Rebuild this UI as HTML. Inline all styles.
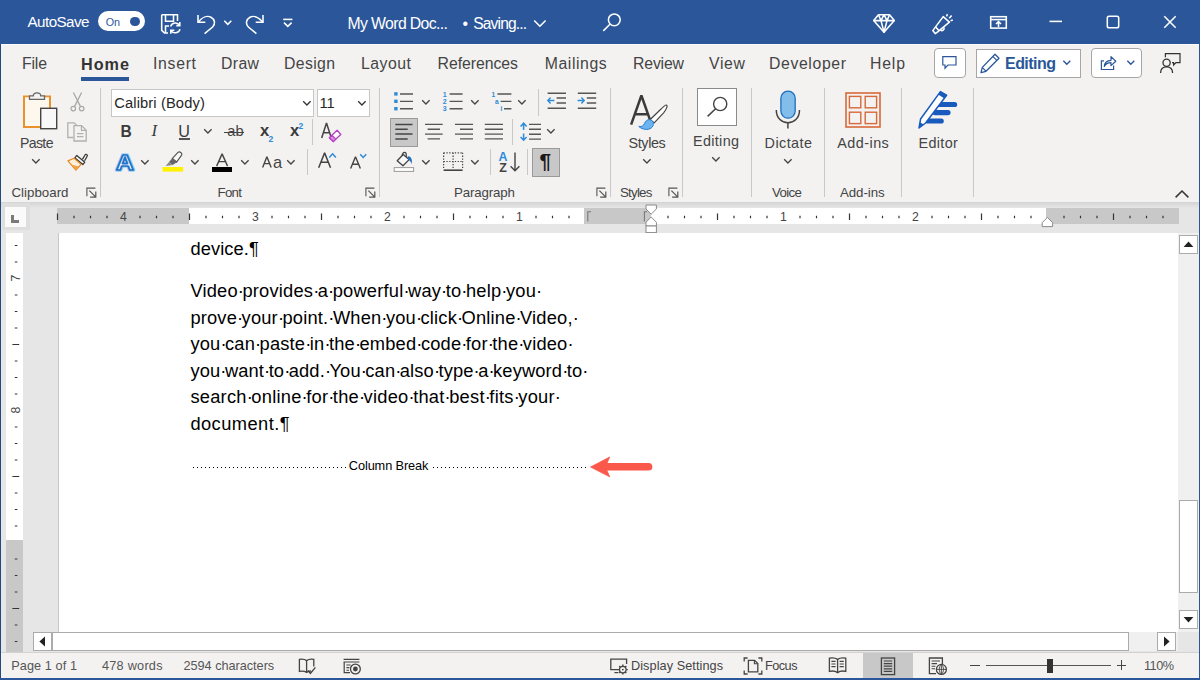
<!DOCTYPE html><html><head><meta charset="utf-8"><title>Word</title><style>

html,body{margin:0;padding:0;}
body{width:1200px;height:680px;overflow:hidden;position:relative;background:#e6e6e6;font-family:"Liberation Sans",sans-serif;}
.t{position:absolute;white-space:nowrap;line-height:1;}
.d{display:inline-block;width:4.6px;text-align:center;letter-spacing:0;}

</style></head><body>
<div style="position:absolute;left:0px;top:0px;width:1200px;height:44px;background:#2b579a;"></div>
<div style="position:absolute;left:0px;top:44px;width:1200px;height:158px;background:#f3f2f1;"></div>
<div style="position:absolute;left:0px;top:202px;width:1200px;height:6px;background:linear-gradient(#d4d4d4,#e6e6e6);"></div>
<div style="position:absolute;left:0px;top:652px;width:1200px;height:28px;background:#f3f2f1;border-top:1px solid #d2d2d2;box-sizing:border-box;"></div>
<div style="position:absolute;left:0px;top:44px;width:1px;height:636px;background:#27477f;"></div>
<div style="position:absolute;left:1px;top:44px;width:1198px;height:1px;background:#fbfbfb;"></div>
<div style="position:absolute;left:1199px;top:44px;width:1px;height:636px;background:#2b579a;"></div>
<div style="position:absolute;left:0px;top:678px;width:1200px;height:2px;background:#2b579a;"></div>
<div style="position:absolute;left:98px;top:11px;width:47px;height:20px;background:#fff;border-radius:10px;"></div>
<div style="position:absolute;left:130.3px;top:16.5px;width:9.4px;height:9.4px;background:#2b579a;border-radius:50%;"></div>
<svg style="position:absolute;left:160px;top:13px;" width="22" height="22" viewBox="0 0 22 22" fill="none"><path d="M1.7 1.7 H17.5 V8 M1.7 1.7 V17.3 L4.5 20 H8" stroke="#fff" stroke-width="1.55" fill="none"/><path d="M5.5 1.7 V8.3 H13.5 V1.7" stroke="#fff" stroke-width="1.55" fill="none"/><path d="M5.5 20 V13 H9" stroke="#fff" stroke-width="1.55" fill="none"/><path d="M10.6 13.5 A5 5 0 0 1 19.5 12.2 M19.8 9 V12.6 H16.3" stroke="#fff" stroke-width="1.55" fill="none" stroke-width="1.3"/><path d="M20 16.2 A5 5 0 0 1 11.1 17.6 M10.8 20.8 V17.2 H14.3" stroke="#fff" stroke-width="1.55" fill="none" stroke-width="1.3"/></svg>
<svg style="position:absolute;left:196px;top:13px;" width="21" height="22" viewBox="0 0 21 22" fill="none"><path d="M2 2 V9.3 H9.3" stroke="#fff" stroke-width="1.55" fill="none"/><path d="M2.3 9 C6 4.5 11 2.2 15 4.2 C19.2 6.5 19.5 11 16.6 14 L8.6 20.6" stroke="#fff" stroke-width="1.55" fill="none"/></svg>
<svg style="position:absolute;left:223px;top:19px;" width="10" height="8" viewBox="0 0 10 8" fill="none"><path d="M1.3 1.8 L4.8 5.3 L8.3 1.8" stroke="#fff" stroke-width="1.55" fill="none" stroke-width="1.3"/></svg>
<svg style="position:absolute;left:244px;top:13px;" width="21" height="22" viewBox="0 0 21 22" fill="none"><path d="M19 2 V9.3 H11.7" stroke="#fff" stroke-width="1.55" fill="none"/><path d="M18.7 9 C15 4.5 10 2.2 6 4.2 C1.8 6.5 1.5 11 4.4 14 L12.4 20.6" stroke="#fff" stroke-width="1.55" fill="none"/></svg>
<svg style="position:absolute;left:282px;top:18px;" width="12" height="10" viewBox="0 0 12 10" fill="none"><path d="M1.2 1.4 H10.4" stroke="#fff" stroke-width="1.55" fill="none" stroke-width="1.3"/><path d="M2 4.6 L5.8 8.4 L9.6 4.6" stroke="#fff" stroke-width="1.55" fill="none" stroke-width="1.3"/></svg>
<svg style="position:absolute;left:533px;top:19px;" width="14" height="9" viewBox="0 0 14 9" fill="none"><path d="M1.2 1.5 L6.9 7.2 L12.6 1.5" stroke="#fff" stroke-width="1.55" fill="none" stroke-width="1.3"/></svg>
<svg style="position:absolute;left:602px;top:12px;" width="20" height="20" viewBox="0 0 20 20" fill="none"><circle cx="12.3" cy="7.8" r="5.9" stroke="#fff" stroke-width="1.55" fill="none"/><path d="M8.2 12 L1.3 18.9" stroke="#fff" stroke-width="1.55" fill="none"/></svg>
<svg style="position:absolute;left:872px;top:13px;" width="24" height="21" viewBox="0 0 24 21" fill="none"><path d="M6.5 1.7 H17.5 L22.3 7.6 L12 19.3 L1.7 7.6 Z" stroke="#fff" stroke-width="1.55" fill="none" stroke-width="1.3" stroke-linejoin="round"/><path d="M1.7 7.6 H22.3 M6.5 1.7 L9 7.6 L12 19.3 L15 7.6 L17.5 1.7 M9 7.6 L12 1.7 L15 7.6" stroke="#fff" stroke-width="1.55" fill="none" stroke-width="1.2" stroke-linejoin="round"/></svg>
<svg style="position:absolute;left:931px;top:13px;" width="23" height="22" viewBox="0 0 23 22" fill="none"><path d="M12.2 3.6 L18.4 9.2 L7 18.6 L4.2 20.6 L1.8 17.6 Z" stroke="#fff" stroke-width="1.55" fill="none" stroke-width="1.3" stroke-linejoin="round"/><path d="M4.6 14 L8 17.6" stroke="#fff" stroke-width="1.55" fill="none" stroke-width="1.2"/><path d="M9.5 17.2 A2.3 2.3 0 0 0 13 14.6" stroke="#fff" stroke-width="1.55" fill="none" stroke-width="1.2"/><path d="M15.5 3.3 L16.5 1.2 M18.3 5.2 L20.6 2.4 M19.6 7.8 L21.8 7" stroke="#fff" stroke-width="1.55" fill="none" stroke-width="1.2"/></svg>
<svg style="position:absolute;left:989px;top:15px;" width="19" height="15" viewBox="0 0 19 15" fill="none"><rect x="1.7" y="1.7" width="15.6" height="11.4" stroke="#fff" stroke-width="1.55" fill="none" stroke-width="1.3"/><path d="M1.7 4.6 H17.3" stroke="#fff" stroke-width="1.55" fill="none" stroke-width="1.2"/><path d="M9.5 12 V6.8 M7 9 L9.5 6.6 L12 9" stroke="#fff" stroke-width="1.55" fill="none" stroke-width="1.2"/></svg>
<svg style="position:absolute;left:1049px;top:20px;" width="14" height="3" viewBox="0 0 14 3" fill="none"><path d="M0.5 1.4 H13" stroke="#fff" stroke-width="1.55" fill="none" stroke-width="1.3"/></svg>
<svg style="position:absolute;left:1106px;top:15px;" width="14" height="14" viewBox="0 0 14 14" fill="none"><rect x="1.3" y="1.3" width="11.4" height="11.4" rx="1.8" stroke="#fff" stroke-width="1.55" fill="none" stroke-width="1.3"/></svg>
<svg style="position:absolute;left:1163px;top:15px;" width="14" height="14" viewBox="0 0 14 14" fill="none"><path d="M1.3 1.3 L12.7 12.7 M12.7 1.3 L1.3 12.7" stroke="#fff" stroke-width="1.55" fill="none" stroke-width="1.3"/></svg>
<div style="position:absolute;left:81px;top:77px;width:48px;height:3.5px;background:#2b579a;"></div>
<div style="position:absolute;left:934px;top:48px;width:32px;height:30px;background:#fff;border:1px solid #a6a6a6;border-radius:4px;box-sizing:border-box;"></div>
<svg style="position:absolute;left:941px;top:55px;" width="18" height="16" viewBox="0 0 18 16" fill="none"><path d="M1.8 1.6 H15 V10 H7 L4 13.2 V10 H1.8 Z" stroke="#2b579a" stroke-width="1.2" fill="none" stroke-linejoin="miter"/></svg>
<div style="position:absolute;left:976px;top:49px;width:105px;height:28.5px;background:#fff;border:1px solid #a6a6a6;box-sizing:border-box;"></div>
<svg style="position:absolute;left:979px;top:52px;" width="23" height="23" viewBox="0 0 23 23" fill="none"><path d="M16 2.3 L20 6.3 L7 19.3 L2 20.6 L3.3 15.4 Z" stroke="#2b579a" stroke-width="1.3" fill="none" stroke-linejoin="round"/><path d="M14 4.6 L17.8 8.4" stroke="#2b579a" stroke-width="1.2"/><path d="M3.4 15.6 L6.8 19" stroke="#2b579a" stroke-width="1.1"/></svg>
<svg style="position:absolute;left:1062px;top:59px;" width="10" height="8" viewBox="0 0 10 8" fill="none"><path d="M1.3 1.8 L4.8 5.3 L8.3 1.8" stroke="#2b579a" stroke-width="1.4"/></svg>
<div style="position:absolute;left:1091px;top:48px;width:51px;height:30px;background:#fff;border:1px solid #a6a6a6;border-radius:4px;box-sizing:border-box;"></div>
<svg style="position:absolute;left:1099px;top:54px;" width="20" height="18" viewBox="0 0 20 18" fill="none"><path d="M5 6.8 H2.4 V15.5 H14.6 V11.5" stroke="#2b579a" stroke-width="1.2" fill="none"/><path d="M5.3 12.5 C5.6 8.6 8.2 6.4 12 6.3 V2.6 L16.8 7.2 L12 11.6 V8.6 C9 8.6 6.6 9.7 5.3 12.5 Z" stroke="#2b579a" stroke-width="1.2" fill="none" stroke-linejoin="round"/></svg>
<svg style="position:absolute;left:1126px;top:59px;" width="10" height="8" viewBox="0 0 10 8" fill="none"><path d="M1.3 1.8 L4.8 5.3 L8.3 1.8" stroke="#2b579a" stroke-width="1.4"/></svg>
<svg style="position:absolute;left:1159px;top:52px;" width="23" height="23" viewBox="0 0 23 23" fill="none"><circle cx="7.6" cy="10.8" r="3.6" stroke="#333" stroke-width="1.3"/><path d="M1.6 21 C1.6 16.6 4.2 14.8 7.6 14.8 C11 14.8 13.6 16.6 13.6 21" stroke="#333" stroke-width="1.3" fill="none"/><path d="M6.4 5.2 V1.7 H21 V10.6 H17 L14.6 13 V10.6 H13" stroke="#333" stroke-width="1.2" fill="none"/></svg>
<div style="position:absolute;left:100px;top:88px;width:1px;height:108.5px;background:#c8c8c8;"></div>
<div style="position:absolute;left:379px;top:88px;width:1px;height:108.5px;background:#c8c8c8;"></div>
<div style="position:absolute;left:610px;top:88px;width:1px;height:108.5px;background:#c8c8c8;"></div>
<div style="position:absolute;left:682px;top:88px;width:1px;height:108.5px;background:#c8c8c8;"></div>
<div style="position:absolute;left:751px;top:88px;width:1px;height:108.5px;background:#c8c8c8;"></div>
<div style="position:absolute;left:824px;top:88px;width:1px;height:108.5px;background:#c8c8c8;"></div>
<div style="position:absolute;left:901px;top:88px;width:1px;height:108.5px;background:#c8c8c8;"></div>
<div style="position:absolute;left:973px;top:88px;width:1px;height:108.5px;background:#c8c8c8;"></div>
<svg style="position:absolute;left:20px;top:90px;" width="40" height="42" viewBox="0 0 40 42" fill="none"><path d="M9.5 6.5 H4 V37 H21" stroke="#e8912d" stroke-width="2" fill="#fef7ee"/><path d="M24.5 6.5 H30 V18" stroke="#e8912d" stroke-width="2" fill="none"/>
<path d="M5 7.5 H29 V36 H5 Z" fill="#fef7ee"/>
<path d="M9.5 9.3 V5.8 H13.3 C13.3 1.8 20.7 1.8 20.7 5.8 H24.5 V9.3 Z" stroke="#666" stroke-width="1.3" fill="#f3f2f1"/>
<rect x="20.7" y="18.3" width="16" height="20.4" fill="#f8f8f8" stroke="#444" stroke-width="1.4"/></svg>
<svg style="position:absolute;left:31.4px;top:158.3px;" width="10" height="7" viewBox="0 0 10 7" fill="none"><path d="M1.2 1.3 L4.9 5 L8.6 1.3" stroke="#444" stroke-width="1.3"/></svg>
<svg style="position:absolute;left:69px;top:91px;" width="17" height="22" viewBox="0 0 17 22" fill="none"><path d="M4.4 1.5 L11.4 15.4 M12.6 1.5 L5.6 15.4" stroke="#a8a8a8" stroke-width="1.3"/><circle cx="4.3" cy="17.6" r="2.3" stroke="#a8a8a8" stroke-width="1.2"/><circle cx="12.7" cy="17.6" r="2.3" stroke="#a8a8a8" stroke-width="1.2"/></svg>
<svg style="position:absolute;left:66px;top:121px;" width="22" height="22" viewBox="0 0 22 22" fill="none"><path d="M7.5 16.5 H1.8 V1.8 H8.2 L11 4.6" stroke="#b0b0b0" stroke-width="1.3" fill="none"/><path d="M8 4.6 H15.6 L20.2 9.2 V20 H8 Z" stroke="#b0b0b0" stroke-width="1.3" fill="#f3f2f1"/><path d="M15.4 4.8 V9.4 H20" stroke="#b0b0b0" stroke-width="1.1"/><path d="M11 12.6 H17.4 M11 15.6 H17.4" stroke="#b0b0b0" stroke-width="1.1"/></svg>
<svg style="position:absolute;left:66px;top:151px;" width="23" height="21" viewBox="0 0 23 21" fill="none"><path d="M16.4 8.4 L19 4 C19.9 2.5 22 3.8 21.1 5.3 L18.6 9.8" stroke="#3b3b3b" stroke-width="1.3" fill="#f8f8f8"/><path d="M10.8 4.4 L18.8 11.2 L16.8 13.6 L8.8 6.8 Z" stroke="#3b3b3b" stroke-width="1.3" fill="#f8f8f8" stroke-linejoin="round"/><path d="M8.1 7.2 L15 13.4 L9.9 19.2 L1.9 9.9 Z" stroke="#e8861e" stroke-width="1.2" fill="#fdf0de" stroke-linejoin="round"/><path d="M5.2 13.4 L13 15.6 L9.9 19.2 Z" fill="#f2a34a"/></svg>
<svg style="position:absolute;left:85.5px;top:186.5px;" width="12" height="12" viewBox="0 0 12 12" fill="none"><path d="M0.9 9.3 V1.1 H9.4" stroke="#555" stroke-width="1.1"/><path d="M3.4 3.7 L9.6 9.9 M9.8 4.4 V10.1 H4.1" stroke="#555" stroke-width="1.2"/></svg>
<div style="position:absolute;left:111px;top:88.5px;width:203px;height:28px;background:#fff;border:1px solid #c6c6c6;box-sizing:border-box;"></div>
<svg style="position:absolute;left:301.6px;top:99.5px;" width="10" height="7" viewBox="0 0 10 7" fill="none"><path d="M1.2 1.3 L4.9 5 L8.6 1.3" stroke="#333" stroke-width="1.3"/></svg>
<div style="position:absolute;left:316.5px;top:88.5px;width:53.5px;height:28px;background:#fff;border:1px solid #c6c6c6;box-sizing:border-box;"></div>
<svg style="position:absolute;left:357.4px;top:99.5px;" width="10" height="7" viewBox="0 0 10 7" fill="none"><path d="M1.2 1.3 L4.9 5 L8.6 1.3" stroke="#333" stroke-width="1.3"/></svg>
<div style="position:absolute;left:178.6px;top:138.3px;width:11.2px;height:1.3px;background:#555;"></div>
<svg style="position:absolute;left:203.2px;top:128.2px;" width="10" height="7" viewBox="0 0 10 7" fill="none"><path d="M1.2 1.3 L4.9 5 L8.6 1.3" stroke="#444" stroke-width="1.3"/></svg>
<div style="position:absolute;left:224px;top:132.2px;width:19.6px;height:1.2px;background:#444;"></div>
<div style="position:absolute;left:312px;top:119px;width:1px;height:26px;background:#c8c8c8;"></div>
<svg style="position:absolute;left:319.4px;top:120.2px;" width="16" height="21" viewBox="0 0 16 21" fill="none"><path d="M2.67 18.10 L7.50 2.90 L12.32 18.10 M4.32 12.63 H10.68" stroke="#444" stroke-width="1.5" stroke-linejoin="miter" stroke-miterlimit="2" fill="none"/></svg>
<svg style="position:absolute;left:328px;top:129px;" width="14" height="14" viewBox="0 0 14 14" fill="none"><path d="M1.4 8.8 L9.1 1.3 L12.8 5.5 L5.3 12.5 Z" stroke="#b846c4" stroke-width="1.4" fill="#fff" stroke-linejoin="round"/><path d="M1.4 8.8 L4 6.3 L7.9 10.1 L5.3 12.5 Z" fill="#d88ee0" stroke="#b846c4" stroke-width="1.2" stroke-linejoin="round"/></svg>
<svg style="position:absolute;left:113px;top:150px;" width="24" height="24" viewBox="0 0 24 24" fill="none"><g transform="translate(12 0) scale(1.12 1) translate(-12 0)"><text x="12" y="19.6" text-anchor="middle" font-family="Liberation Sans" font-weight="700" font-size="22" fill="#ffffff" stroke="#9fd0f4" stroke-width="3.6" stroke-linejoin="round">A</text><text x="12" y="19.6" text-anchor="middle" font-family="Liberation Sans" font-weight="700" font-size="22" fill="#ffffff" stroke="#1e73c8" stroke-width="1.7" stroke-linejoin="round">A</text></g></svg>
<svg style="position:absolute;left:139.6px;top:159.2px;" width="10" height="7" viewBox="0 0 10 7" fill="none"><path d="M1.2 1.3 L4.9 5 L8.6 1.3" stroke="#444" stroke-width="1.3"/></svg>
<svg style="position:absolute;left:161px;top:150px;" width="24" height="24" viewBox="0 0 24 24" fill="none"><path d="M11.4 8.4 L17 2.4 C18.6 0.8 21.8 3.4 20.6 5.2 L15.6 12 Z" stroke="#555" stroke-width="1.2" fill="#f8f8f8"/><path d="M11.2 8.2 L15.8 12.2 L11.6 15 L8 12 Z" fill="#666"/><path d="M8 12 L11.6 15 L4.6 16 Z" fill="#888"/><rect x="1.5" y="17" width="20.6" height="4.6" fill="#fff200"/></svg>
<svg style="position:absolute;left:190px;top:159.2px;" width="10" height="7" viewBox="0 0 10 7" fill="none"><path d="M1.2 1.3 L4.9 5 L8.6 1.3" stroke="#444" stroke-width="1.3"/></svg>
<svg style="position:absolute;left:214.4px;top:150.7px;" width="17" height="18" viewBox="0 0 17 18" fill="none"><path d="M2.63 15.10 L8.10 2.84 L13.57 15.10 M4.49 10.65 H11.71" stroke="#444" stroke-width="1.4" stroke-linejoin="miter" stroke-miterlimit="2" fill="none"/></svg>
<div style="position:absolute;left:211.9px;top:167px;width:20.2px;height:4.6px;background:#000;"></div>
<svg style="position:absolute;left:240.4px;top:159.2px;" width="10" height="7" viewBox="0 0 10 7" fill="none"><path d="M1.2 1.3 L4.9 5 L8.6 1.3" stroke="#444" stroke-width="1.3"/></svg>
<svg style="position:absolute;left:259.8px;top:153.9px;" width="15" height="17" viewBox="0 0 15 17" fill="none"><path d="M2.63 13.60 L6.90 2.84 L11.17 13.60 M4.09 9.66 H9.71" stroke="#444" stroke-width="1.4" stroke-linejoin="miter" stroke-miterlimit="2" fill="none"/></svg>
<svg style="position:absolute;left:285.6px;top:159.2px;" width="10" height="7" viewBox="0 0 10 7" fill="none"><path d="M1.2 1.3 L4.9 5 L8.6 1.3" stroke="#444" stroke-width="1.3"/></svg>
<div style="position:absolute;left:307px;top:149px;width:1px;height:26px;background:#c8c8c8;"></div>
<svg style="position:absolute;left:315.5px;top:150.4px;" width="18" height="21" viewBox="0 0 18 21" fill="none"><path d="M2.67 17.70 L8.60 2.90 L14.52 17.70 M4.69 12.36 H12.51" stroke="#444" stroke-width="1.5" stroke-linejoin="miter" stroke-miterlimit="2" fill="none"/></svg>
<svg style="position:absolute;left:328.4px;top:152.2px;" width="10" height="7" viewBox="0 0 10 7" fill="none"><path d="M1.3 5.4 L4.6 1.8 L7.9 5.4" stroke="#2e8bd8" stroke-width="1.5"/></svg>
<svg style="position:absolute;left:347.5px;top:153.7px;" width="16" height="17" viewBox="0 0 16 17" fill="none"><path d="M2.63 14.40 L7.50 2.84 L12.37 14.40 M4.29 10.18 H10.71" stroke="#444" stroke-width="1.4" stroke-linejoin="miter" stroke-miterlimit="2" fill="none"/></svg>
<svg style="position:absolute;left:358.6px;top:153px;" width="9" height="6" viewBox="0 0 9 6" fill="none"><path d="M1.2 1.2 L4.2 4.4 L7.2 1.2" stroke="#2e8bd8" stroke-width="1.5"/></svg>
<svg style="position:absolute;left:364.5px;top:186.5px;" width="12" height="12" viewBox="0 0 12 12" fill="none"><path d="M0.9 9.3 V1.1 H9.4" stroke="#555" stroke-width="1.1"/><path d="M3.4 3.7 L9.6 9.9 M9.8 4.4 V10.1 H4.1" stroke="#555" stroke-width="1.2"/></svg>
<svg style="position:absolute;left:393px;top:91px;" width="22" height="21" viewBox="0 0 22 21" fill="none"><rect x="1.2" y="1.2" width="3.4" height="3.4" fill="#2e8bd8"/><rect x="1.2" y="8.6" width="3.4" height="3.4" fill="#2e8bd8"/><rect x="1.2" y="16" width="3.4" height="3.4" fill="#2e8bd8"/><path d="M7 3 H20 M7 10.4 H20 M7 17.8 H20" stroke="#555" stroke-width="1.4"/></svg>
<svg style="position:absolute;left:421.2px;top:99.3px;" width="10" height="7" viewBox="0 0 10 7" fill="none"><path d="M1.2 1.3 L4.9 5 L8.6 1.3" stroke="#444" stroke-width="1.3"/></svg>
<svg style="position:absolute;left:442px;top:91px;" width="22" height="21" viewBox="0 0 22 21" fill="none"><g font-family="Liberation Sans" font-weight="700" font-size="7" fill="#2e8bd8"><text x="0.8" y="6">1</text><text x="0.8" y="13.2">2</text><text x="0.8" y="20.4">3</text></g><path d="M7.6 3 H20.6 M7.6 10.4 H20.6 M7.6 17.8 H20.6" stroke="#555" stroke-width="1.4"/></svg>
<svg style="position:absolute;left:470.4px;top:99.3px;" width="10" height="7" viewBox="0 0 10 7" fill="none"><path d="M1.2 1.3 L4.9 5 L8.6 1.3" stroke="#444" stroke-width="1.3"/></svg>
<svg style="position:absolute;left:491px;top:91px;" width="22" height="21" viewBox="0 0 22 21" fill="none"><g font-family="Liberation Sans" font-weight="700" font-size="6.6" fill="#2e8bd8"><text x="0.6" y="5.8">1</text><text x="4" y="12.8">a</text><text x="9.6" y="20.4">i</text></g><path d="M6.4 3 H20.4 M9.6 10.4 H20.4 M13 17.8 H20.4" stroke="#555" stroke-width="1.4"/></svg>
<svg style="position:absolute;left:516.6px;top:99.3px;" width="10" height="7" viewBox="0 0 10 7" fill="none"><path d="M1.2 1.3 L4.9 5 L8.6 1.3" stroke="#444" stroke-width="1.3"/></svg>
<div style="position:absolute;left:538px;top:88.5px;width:1px;height:27.0px;background:#c8c8c8;"></div>
<svg style="position:absolute;left:546px;top:91px;" width="22" height="20" viewBox="0 0 22 20" fill="none"><path d="M1.6 2.2 H20 M10.6 7 H20 M10.6 12 H20 M1.6 17.2 H20" stroke="#555" stroke-width="1.4"/><path d="M8.4 9.5 H2 M4.6 6.6 L1.8 9.5 L4.6 12.4" stroke="#2e8bd8" stroke-width="1.4"/></svg>
<svg style="position:absolute;left:576px;top:91px;" width="22" height="20" viewBox="0 0 22 20" fill="none"><path d="M1.8 2.2 H20.2 M10.8 7 H20.2 M10.8 12 H20.2 M1.8 17.2 H20.2" stroke="#555" stroke-width="1.4"/><path d="M1.6 9.5 H8 M5.4 6.6 L8.2 9.5 L5.4 12.4" stroke="#2e8bd8" stroke-width="1.4"/></svg>
<div style="position:absolute;left:390px;top:118px;width:28px;height:28.5px;background:#c8c8c8;border:1px solid #9a9a9a;box-sizing:border-box;"></div>
<svg style="position:absolute;left:394px;top:122px;" width="20" height="20" viewBox="0 0 20 20" fill="none"><path d="M1.3 2.4 H18.5 M1.3 7.3 H13.7 M1.3 12.1 H18.5 M1.3 16.9 H13.7" stroke="#444" stroke-width="1.5"/></svg>
<svg style="position:absolute;left:424px;top:122px;" width="20" height="20" viewBox="0 0 20 20" fill="none"><path d="M1 2.4 H18.7 M3.6 7.3 H16 M1 12.1 H18.7 M3.6 16.9 H16" stroke="#555" stroke-width="1.4"/></svg>
<svg style="position:absolute;left:454px;top:122px;" width="20" height="20" viewBox="0 0 20 20" fill="none"><path d="M1 2.4 H19 M6 7.3 H19 M1 12.1 H19 M6 16.9 H19" stroke="#555" stroke-width="1.4"/></svg>
<svg style="position:absolute;left:484px;top:122px;" width="20" height="20" viewBox="0 0 20 20" fill="none"><path d="M0.8 2.4 H19 M0.8 7.3 H19 M0.8 12.1 H19 M0.8 16.9 H19" stroke="#555" stroke-width="1.4"/></svg>
<div style="position:absolute;left:512px;top:119px;width:1px;height:26px;background:#c8c8c8;"></div>
<svg style="position:absolute;left:519px;top:121px;" width="24" height="22" viewBox="0 0 24 22" fill="none"><path d="M10 3.4 H22 M10 8.3 H22 M10 13.2 H22 M10 18.1 H22" stroke="#555" stroke-width="1.4"/><path d="M4.6 2.4 V9 M4.6 12.4 V19 M1.6 5.4 L4.6 2.2 L7.6 5.4 M1.6 16 L4.6 19.2 L7.6 16" stroke="#2e8bd8" stroke-width="1.5"/></svg>
<svg style="position:absolute;left:545.6px;top:128.2px;" width="10" height="7" viewBox="0 0 10 7" fill="none"><path d="M1.2 1.3 L4.9 5 L8.6 1.3" stroke="#444" stroke-width="1.3"/></svg>
<svg style="position:absolute;left:393px;top:151px;" width="23" height="22" viewBox="0 0 23 22" fill="none"><path d="M4.2 9.7 L10.2 3.5 L16.1 8.6 L10 14.8 Z" stroke="#444" stroke-width="1.3" fill="#f8f8f8" stroke-linejoin="round"/><path d="M9 4.8 C9.4 2.6 10.4 1.3 11.6 1.4 C12.8 1.5 13.4 2.6 13.3 4.2 L13.2 6" stroke="#444" stroke-width="1.2" fill="none"/><path d="M14.6 5.4 C17.8 5 19.6 8.2 18.7 13.2 C18 10.8 17 9.6 15.6 9 Z" fill="#1e6fc0"/><rect x="1.2" y="16.6" width="19.4" height="3.8" fill="#fff" stroke="#9a9a9a" stroke-width="1"/></svg>
<svg style="position:absolute;left:421.2px;top:159.2px;" width="10" height="7" viewBox="0 0 10 7" fill="none"><path d="M1.2 1.3 L4.9 5 L8.6 1.3" stroke="#444" stroke-width="1.3"/></svg>
<svg style="position:absolute;left:442px;top:151px;" width="22" height="21" viewBox="0 0 22 21" fill="none"><path d="M1.6 19.2 H20.6" stroke="#444" stroke-width="1.6"/><path d="M1.6 1.8 H20.6 M1.6 10.5 H20.6 M1.6 1.8 V18 M11.1 1.8 V18 M20.6 1.8 V18" stroke="#444" stroke-width="1.2" stroke-dasharray="1.3 1.5"/></svg>
<svg style="position:absolute;left:470.4px;top:159.2px;" width="10" height="7" viewBox="0 0 10 7" fill="none"><path d="M1.2 1.3 L4.9 5 L8.6 1.3" stroke="#444" stroke-width="1.3"/></svg>
<div style="position:absolute;left:490px;top:149px;width:1px;height:26px;background:#c8c8c8;"></div>
<svg style="position:absolute;left:509px;top:151px;" width="12" height="22" viewBox="0 0 12 22" fill="none"><path d="M6 1.4 V19.6 M1.6 15.2 L6 19.8 L10.4 15.2" stroke="#444" stroke-width="1.4"/></svg>
<div style="position:absolute;left:527px;top:149px;width:1px;height:26px;background:#c8c8c8;"></div>
<div style="position:absolute;left:532px;top:148.3px;width:28px;height:28.5px;background:#c8c8c8;border:1px solid #9a9a9a;box-sizing:border-box;"></div>
<svg style="position:absolute;left:595.5px;top:186.5px;" width="12" height="12" viewBox="0 0 12 12" fill="none"><path d="M0.9 9.3 V1.1 H9.4" stroke="#555" stroke-width="1.1"/><path d="M3.4 3.7 L9.6 9.9 M9.8 4.4 V10.1 H4.1" stroke="#555" stroke-width="1.2"/></svg>
<svg style="position:absolute;left:627.8px;top:92.4px;" width="28" height="36" viewBox="0 0 28 36" fill="none"><path d="M3.12 32.60 L13.40 3.50 L23.68 32.60 M6.63 22.20 H20.17" stroke="#3b3b3b" stroke-width="2.5" stroke-linejoin="miter" stroke-miterlimit="2" fill="none"/></svg>
<svg style="position:absolute;left:636px;top:102px;" width="34" height="30" viewBox="0 0 34 30" fill="none"><path d="M30.4 3 C32 3.6 30.4 7.4 27.6 10.8 L18.2 20.8 L14 17.8 L24 8 C27 5 29.4 2.6 30.4 3 Z" stroke="#444" stroke-width="1.2" fill="#fff" stroke-linejoin="round"/><path d="M13.2 17.6 C15.6 17.8 17.8 19.6 17.4 22.4 C16.8 26.4 12 28.4 7.6 27 C5.4 26.4 3.6 25.4 2.8 24.4 C5.8 25 7.4 23.8 8.4 21.6 C9.4 19.4 11 17.6 13.2 17.6 Z" fill="#6cb4ee" stroke="#2b7cd3" stroke-width="1"/></svg>
<svg style="position:absolute;left:641.6px;top:158.3px;" width="10" height="7" viewBox="0 0 10 7" fill="none"><path d="M1.2 1.3 L4.9 5 L8.6 1.3" stroke="#444" stroke-width="1.3"/></svg>
<svg style="position:absolute;left:667.5px;top:186.5px;" width="12" height="12" viewBox="0 0 12 12" fill="none"><path d="M0.9 9.3 V1.1 H9.4" stroke="#555" stroke-width="1.1"/><path d="M3.4 3.7 L9.6 9.9 M9.8 4.4 V10.1 H4.1" stroke="#555" stroke-width="1.2"/></svg>
<div style="position:absolute;left:697px;top:88px;width:40px;height:38px;background:#fff;border:1px solid #8a8a8a;box-sizing:border-box;"></div>
<svg style="position:absolute;left:705px;top:94px;" width="26" height="26" viewBox="0 0 26 26" fill="none"><circle cx="15.2" cy="10" r="6.6" stroke="#444" stroke-width="1.4"/><path d="M10.6 14.8 L2.6 22.4" stroke="#444" stroke-width="1.5"/></svg>
<svg style="position:absolute;left:711.4px;top:156.3px;" width="10" height="7" viewBox="0 0 10 7" fill="none"><path d="M1.2 1.3 L4.9 5 L8.6 1.3" stroke="#444" stroke-width="1.3"/></svg>
<svg style="position:absolute;left:774px;top:89px;" width="28" height="42" viewBox="0 0 28 42" fill="none"><rect x="6.9" y="2.1" width="14.3" height="27.1" rx="7.1" fill="#83beeb" stroke="#1e6fc0" stroke-width="1.3"/><path d="M2.3 21 C2.3 38 25.5 38 25.5 21" stroke="#444" stroke-width="1.5" fill="none"/><path d="M13.9 34 V39.4" stroke="#444" stroke-width="1.5"/></svg>
<svg style="position:absolute;left:782.6px;top:158.3px;" width="10" height="7" viewBox="0 0 10 7" fill="none"><path d="M1.2 1.3 L4.9 5 L8.6 1.3" stroke="#444" stroke-width="1.3"/></svg>
<svg style="position:absolute;left:844px;top:91px;" width="38" height="38" viewBox="0 0 38 38" fill="none"><rect x="2" y="2" width="34" height="34" stroke="#d8683a" stroke-width="1.6"/><rect x="5.4" y="5.4" width="11.4" height="11.4" stroke="#d8683a" stroke-width="1.4"/><rect x="5.4" y="21.2" width="11.4" height="11.4" stroke="#d8683a" stroke-width="1.4"/><rect x="21.2" y="5.4" width="11.4" height="11.4" stroke="#d8683a" stroke-width="1.4"/><rect x="21.2" y="21.2" width="11.4" height="11.4" stroke="#d8683a" stroke-width="1.4"/></svg>
<svg style="position:absolute;left:916px;top:89px;" width="44" height="42" viewBox="0 0 44 42" fill="none"><path d="M24 15.5 H38.6 M19 23.6 H32 M12 32 H25.2" stroke="#185abd" stroke-width="5.2" stroke-linecap="round"/><path d="M24.4 2.6 L30.6 6.2 L9.6 34 L3 39 L4.6 30 Z" fill="#fff" stroke="#185abd" stroke-width="1.5" stroke-linejoin="round"/><path d="M24.4 2.6 L30.6 6.2 L28.4 9.4 L22.2 5.6 Z" fill="#185abd"/><path d="M3 39 L4 33.2 L7.6 35.6 Z" fill="#185abd"/></svg>
<svg style="position:absolute;left:1174px;top:189px;" width="16" height="10" viewBox="0 0 16 10" fill="none"><path d="M1.6 8.4 L8 2 L14.4 8.4" stroke="#333" stroke-width="1.5"/></svg>
<div style="position:absolute;left:2px;top:203px;width:28px;height:27px;background:#dedede;"></div>
<div style="position:absolute;left:5px;top:206.5px;width:20.5px;height:20px;background:#fafafa;"></div>
<div style="position:absolute;left:11px;top:215px;width:2.6px;height:8px;background:#7a7a7a;"></div>
<div style="position:absolute;left:11px;top:220.3px;width:8px;height:2.6px;background:#7a7a7a;"></div>
<div style="position:absolute;left:57px;top:208px;width:1122px;height:16px;background:#fff;"></div>
<div style="position:absolute;left:57px;top:208px;width:132px;height:16px;background:#c8c8c8;"></div>
<div style="position:absolute;left:584px;top:208px;width:67px;height:16px;background:#c8c8c8;"></div>
<div style="position:absolute;left:1046px;top:208px;width:133px;height:16px;background:#c8c8c8;"></div>
<svg style="position:absolute;left:0px;top:0px;pointer-events:none;" width="1200" height="240" viewBox="0 0 1200 240" fill="none"><path d="M57.5 213.6 V220 M74.0 215.8 V218.2 M90.5 215.8 V218.2 M107.0 215.8 V218.2 M140.0 215.8 V218.2 M156.5 215.8 V218.2 M173.0 215.8 V218.2 M189.5 213.6 V220 M206.0 215.8 V218.2 M222.5 215.8 V218.2 M239.0 215.8 V218.2 M272.0 215.8 V218.2 M288.5 215.8 V218.2 M305.0 215.8 V218.2 M321.5 213.6 V220 M338.0 215.8 V218.2 M354.5 215.8 V218.2 M371.0 215.8 V218.2 M404.0 215.8 V218.2 M420.5 215.8 V218.2 M437.0 215.8 V218.2 M453.5 213.6 V220 M470.0 215.8 V218.2 M486.5 215.8 V218.2 M503.0 215.8 V218.2 M536.0 215.8 V218.2 M552.5 215.8 V218.2 M569.0 215.8 V218.2 M668.0 215.8 V218.2 M684.5 215.8 V218.2 M701.0 215.8 V218.2 M717.5 213.6 V220 M734.0 215.8 V218.2 M750.5 215.8 V218.2 M767.0 215.8 V218.2 M800.0 215.8 V218.2 M816.5 215.8 V218.2 M833.0 215.8 V218.2 M849.5 213.6 V220 M866.0 215.8 V218.2 M882.5 215.8 V218.2 M899.0 215.8 V218.2 M932.0 215.8 V218.2 M948.5 215.8 V218.2 M965.0 215.8 V218.2 M981.5 213.6 V220 M998.0 215.8 V218.2 M1014.5 215.8 V218.2 M1031.0 215.8 V218.2 M1064.0 215.8 V218.2 M1080.5 215.8 V218.2 M1097.0 215.8 V218.2 M1113.5 213.6 V220 M1130.0 215.8 V218.2 M1146.5 215.8 V218.2 M1163.0 215.8 V218.2" stroke="#333" stroke-width="1.2"/></svg>
<svg style="position:absolute;left:586px;top:210px;" width="62" height="12" viewBox="0 0 62 12" fill="none"><path d="M1.8 11.5 V1.8 H5 M61 1.8 H58.4 V11.5" stroke="#777" stroke-width="1.1"/></svg>
<svg style="position:absolute;left:645.4px;top:204px;" width="13" height="30" viewBox="0 0 13 30" fill="none"><path d="M1 1 H11.4 V5 L6.2 10.2 L1 5 Z" fill="#fff" stroke="#8a8a8a" stroke-width="1"/><path d="M6.2 13 L11.4 18.2 V22 H1 V18.2 Z" fill="#fff" stroke="#8a8a8a" stroke-width="1"/><rect x="1" y="22" width="10.4" height="6.6" fill="#fff" stroke="#8a8a8a" stroke-width="1"/></svg>
<svg style="position:absolute;left:1041px;top:216px;" width="13" height="12" viewBox="0 0 13 12" fill="none"><path d="M6.4 1.4 L11.6 6.6 V10.6 H1.2 V6.6 Z" fill="#fff" stroke="#8a8a8a" stroke-width="1"/></svg>
<div style="position:absolute;left:6px;top:233px;width:17px;height:419px;background:#fff;"></div>
<div style="position:absolute;left:6px;top:540px;width:17px;height:112px;background:#c8c8c8;"></div>
<span class="t" style="left:9.8px;top:272.1px;font-size:12.2px;color:#444;transform:rotate(-90deg);transform-origin:50% 50%;width:12px;text-align:center;">7</span>
<span class="t" style="left:9.8px;top:404.1px;font-size:12.2px;color:#444;transform:rotate(-90deg);transform-origin:50% 50%;width:12px;text-align:center;">8</span>
<svg style="position:absolute;left:0px;top:230px;" width="30" height="425" viewBox="0 0 30 425" fill="none"><path d="M14.8 245.5 H17.4 M14.8 262.0 H17.4 M14.8 295.0 H17.4 M14.8 311.5 H17.4 M14.8 328.0 H17.4 M12.4 344.5 H19.2 M14.8 361.0 H17.4 M14.8 377.5 H17.4 M14.8 394.0 H17.4 M14.8 427.0 H17.4 M14.8 443.5 H17.4 M14.8 460.0 H17.4 M12.4 476.5 H19.2 M14.8 493.0 H17.4 M14.8 509.5 H17.4 M14.8 526.0 H17.4 M14.8 559.0 H17.4 M14.8 575.5 H17.4 M14.8 592.0 H17.4 M12.4 608.5 H19.2 M14.8 625.0 H17.4 M14.8 641.5 H17.4" stroke="#333" stroke-width="1.2" transform="translate(0,-230)"/></svg>
<div style="position:absolute;left:58px;top:233px;width:1120px;height:399px;background:#fff;border-left:1px solid #c6c6c6;box-sizing:border-box;"></div>
<div style="position:absolute;left:1178px;top:233px;width:21px;height:399px;background:#f0f0f0;"></div>
<div style="position:absolute;left:1179px;top:235px;width:19px;height:18.5px;background:#fff;border:1px solid #ababab;box-sizing:border-box;"></div>
<svg style="position:absolute;left:1179px;top:235px;" width="19" height="18.5" viewBox="0 0 19 18.5" fill="none"><path d="M4.6 12 L9.5 6.4 L14.4 12 Z" fill="#222"/></svg>
<div style="position:absolute;left:1179.4px;top:500px;width:18.4px;height:93px;background:#fff;border:1px solid #ababab;box-sizing:border-box;"></div>
<div style="position:absolute;left:1179px;top:610px;width:19px;height:18.5px;background:#fff;border:1px solid #ababab;box-sizing:border-box;"></div>
<svg style="position:absolute;left:1179px;top:610px;" width="19" height="18.5" viewBox="0 0 19 18.5" fill="none"><path d="M4.6 7 L9.5 12.6 L14.4 7 Z" fill="#222"/></svg>
<div style="position:absolute;left:23px;top:632px;width:1176px;height:20px;background:#e6e6e6;"></div>
<div style="position:absolute;left:1128px;top:632px;width:50px;height:19px;background:#f0f0f0;"></div>
<div style="position:absolute;left:33px;top:632px;width:19px;height:19px;background:#fff;border:1px solid #ababab;box-sizing:border-box;"></div>
<svg style="position:absolute;left:33px;top:632px;" width="19" height="19" viewBox="0 0 19 19" fill="none"><path d="M12 4.6 L6.4 9.5 L12 14.4 Z" fill="#222"/></svg>
<div style="position:absolute;left:51.5px;top:632px;width:1077px;height:19px;background:#fff;border:1px solid #ababab;box-sizing:border-box;"></div>
<div style="position:absolute;left:1157px;top:632px;width:19px;height:19px;background:#fff;border:1px solid #ababab;box-sizing:border-box;"></div>
<svg style="position:absolute;left:1157px;top:632px;" width="19" height="19" viewBox="0 0 19 19" fill="none"><path d="M7 4.6 L12.6 9.5 L7 14.4 Z" fill="#222"/></svg>
<div style="position:absolute;left:193px;top:467px;width:153px;height:1px;background:repeating-linear-gradient(90deg,#000 0,#000 1px,transparent 1px,transparent 4px);"></div>
<div style="position:absolute;left:433px;top:467px;width:153px;height:1px;background:repeating-linear-gradient(90deg,#000 0,#000 1px,transparent 1px,transparent 4px);"></div>
<svg style="position:absolute;left:588px;top:454px;" width="68" height="26" viewBox="0 0 68 26" fill="none"><path d="M17 12.75 H60.5" stroke="#fa584a" stroke-width="7.7" stroke-linecap="round"/><path d="M2.5 13 L21.7 3 L17.4 13 L21.7 22.8 Z" fill="#fa584a" stroke="#fa584a" stroke-width="0.8" stroke-linejoin="round"/></svg>
<svg style="position:absolute;left:297px;top:657px;" width="21" height="19" viewBox="0 0 21 19" fill="none"><path d="M9.6 3.6 V14.4 M9.6 3.6 C7.4 2 4.6 2 2.4 2.4 V14.4 C4.6 14 7.4 14 9.6 15.4 C11.6 14 13 14 14 14 M9.6 3.6 C11.8 2 14.6 2 16.8 2.4 V9.6" stroke="#444" stroke-width="1.3" fill="none"/><path d="M10.8 13.4 L13.4 16.4 L18.4 10.4" stroke="#444" stroke-width="1.4" fill="none"/></svg>
<svg style="position:absolute;left:342px;top:657px;" width="21" height="19" viewBox="0 0 21 19" fill="none"><path d="M1.6 2.4 H17.4 M1.6 5 H17.4" stroke="#444" stroke-width="1.2"/><path d="M2.2 5 V15.6 H8" stroke="#444" stroke-width="1.2" fill="none"/><path d="M4.4 8 H8.6 M4.4 10.6 H7.4 M4.4 13.2 H7" stroke="#444" stroke-width="1.1"/><circle cx="13.4" cy="12" r="4.9" stroke="#444" stroke-width="1.3" fill="#f3f2f1"/><circle cx="13.4" cy="12" r="2.4" fill="#444"/></svg>
<svg style="position:absolute;left:609px;top:657px;" width="21" height="19" viewBox="0 0 21 19" fill="none"><path d="M9 12.6 H1.8 V2.2 H17.6 V7" stroke="#444" stroke-width="1.3" fill="none"/><path d="M5.4 15.6 H9.4" stroke="#444" stroke-width="1.2"/><circle cx="13.8" cy="12.6" r="3.3" stroke="#444" stroke-width="1.3" fill="none"/><circle cx="13.8" cy="12.6" r="0.9" fill="#444"/><path d="M13.8 7.6 V9.2 M13.8 16 V17.6 M8.8 12.6 H10.4 M17.2 12.6 H18.8 M10.3 9.1 L11.4 10.2 M16.2 15 L17.3 16.1 M17.3 9.1 L16.2 10.2 M11.4 15 L10.3 16.1" stroke="#444" stroke-width="1.4"/></svg>
<svg style="position:absolute;left:742px;top:656px;" width="22" height="20" viewBox="0 0 22 20" fill="none"><path d="M2.2 5.4 V2 H5.6 M16.4 2 H19.8 V5.4 M19.8 14.6 V18 H16.4 M5.6 18 H2.2 V14.6" stroke="#444" stroke-width="1.3" fill="none"/><path d="M6.4 4.4 H12.6 L15.8 7.6 V15.8 H6.4 Z" stroke="#444" stroke-width="1.3" fill="none"/><path d="M12.4 4.6 V7.8 H15.6" stroke="#444" stroke-width="1.1" fill="none"/></svg>
<svg style="position:absolute;left:827px;top:656px;" width="21" height="19" viewBox="0 0 21 19" fill="none"><path d="M10.6 3.4 C8.4 1.8 5 1.6 2.4 2.2 V15.4 C5 14.8 8.4 15 10.6 16.6 C12.8 15 16.2 14.8 18.8 15.4 V2.2 C16.2 1.6 12.8 1.8 10.6 3.4 Z M10.6 3.4 V16.6" stroke="#444" stroke-width="1.3" fill="none"/><path d="M4.4 5.4 H8.6 M4.4 8 H8.6 M4.4 10.6 H8.6 M12.6 5.4 H16.8 M12.6 8 H16.8 M12.6 10.6 H16.8" stroke="#444" stroke-width="1.1"/></svg>
<div style="position:absolute;left:863px;top:653px;width:50px;height:25px;background:#c8c8c8;"></div>
<svg style="position:absolute;left:879px;top:656px;" width="18" height="20" viewBox="0 0 18 20" fill="none"><rect x="2.4" y="2" width="13.2" height="16.6" stroke="#444" stroke-width="1.3"/><path d="M4.8 5 H13.2 M4.8 7.6 H13.2 M4.8 10.2 H13.2 M4.8 12.8 H13.2 M4.8 15.4 H13.2" stroke="#444" stroke-width="1.2"/></svg>
<svg style="position:absolute;left:927px;top:656px;" width="22" height="20" viewBox="0 0 22 20" fill="none"><path d="M9 17.6 H2.4 V2 H15.4 V8" stroke="#444" stroke-width="1.3" fill="none"/><path d="M4.6 5 H13 M4.6 7.6 H10 M4.6 10.2 H8.4 M4.6 12.8 H8" stroke="#444" stroke-width="1.1"/><circle cx="14.4" cy="13.4" r="5" stroke="#444" stroke-width="1.3" fill="#f3f2f1"/><path d="M9.4 13.4 H19.4 M14.4 8.4 V18.4 M14.4 8.4 C11.6 11 11.6 15.8 14.4 18.4 M14.4 8.4 C17.2 11 17.2 15.8 14.4 18.4" stroke="#444" stroke-width="0.9" fill="none"/></svg>
<div style="position:absolute;left:970px;top:664.6px;width:9.6px;height:1.2px;background:#444;"></div>
<div style="position:absolute;left:986px;top:665px;width:124.6px;height:1px;background:#555;"></div>
<div style="position:absolute;left:1046.6px;top:658.6px;width:6.4px;height:14.4px;background:#333;"></div>
<div style="position:absolute;left:1116.5px;top:664.6px;width:9.6px;height:1.2px;background:#444;"></div>
<div style="position:absolute;left:1120.7px;top:660.4px;width:1.2px;height:9.6px;background:#444;"></div>
<span class="t" style="left:27.5px;top:14.28px;font-size:15.2px;color:#fff;font-weight:400;letter-spacing:-0.554px;">AutoSave</span>
<span class="t" style="left:105.8px;top:16.62px;font-size:10.8px;color:#2b579a;font-weight:400;letter-spacing:-0.206px;">On</span>
<span class="t" style="left:347.5px;top:16.27px;font-size:15.8px;color:#fff;font-weight:400;letter-spacing:-0.620px;">My Word Doc...</span>
<span class="t" style="left:462.4px;top:16.27px;font-size:15.8px;color:#fff;font-weight:400;letter-spacing:0.000px;">•</span>
<span class="t" style="left:473.3px;top:16.44px;font-size:15.6px;color:#fff;font-weight:400;letter-spacing:-0.873px;">Saving...</span>
<span class="t" style="left:22px;top:56.37px;font-size:15.8px;color:#444;font-weight:400;letter-spacing:-0.156px;">File</span>
<span class="t" style="left:153px;top:56.37px;font-size:15.8px;color:#444;font-weight:400;letter-spacing:0.697px;">Insert</span>
<span class="t" style="left:221px;top:56.37px;font-size:15.8px;color:#444;font-weight:400;letter-spacing:0.375px;">Draw</span>
<span class="t" style="left:284px;top:56.37px;font-size:15.8px;color:#444;font-weight:400;letter-spacing:0.362px;">Design</span>
<span class="t" style="left:361px;top:56.37px;font-size:15.8px;color:#444;font-weight:400;letter-spacing:0.512px;">Layout</span>
<span class="t" style="left:437.5px;top:56.37px;font-size:15.8px;color:#444;font-weight:400;letter-spacing:-0.033px;">References</span>
<span class="t" style="left:544.7px;top:56.37px;font-size:15.8px;color:#444;font-weight:400;letter-spacing:0.578px;">Mailings</span>
<span class="t" style="left:633px;top:56.37px;font-size:15.8px;color:#444;font-weight:400;letter-spacing:-0.159px;">Review</span>
<span class="t" style="left:709px;top:56.37px;font-size:15.8px;color:#444;font-weight:400;letter-spacing:0.677px;">View</span>
<span class="t" style="left:769px;top:56.37px;font-size:15.8px;color:#444;font-weight:400;letter-spacing:0.623px;">Developer</span>
<span class="t" style="left:870px;top:56.37px;font-size:15.8px;color:#444;font-weight:400;letter-spacing:0.833px;">Help</span>
<span class="t" style="left:81px;top:56.03px;font-size:16.2px;color:#333;font-weight:700;letter-spacing:1.005px;">Home</span>
<span class="t" style="left:1005px;top:56.40px;font-size:16px;color:#2b579a;font-weight:700;letter-spacing:-0.536px;">Editing</span>
<span class="t" style="left:20px;top:135.81px;font-size:14.1px;color:#444;font-weight:400;letter-spacing:-0.637px;">Paste</span>
<span class="t" style="left:11.5px;top:185.79px;font-size:13.3px;color:#444;font-weight:400;letter-spacing:0.010px;">Clipboard</span>
<span class="t" style="left:114.3px;top:95.70px;font-size:14.7px;color:#262626;font-weight:400;letter-spacing:0.118px;">Calibri (Body)</span>
<span class="t" style="left:319.6px;top:95.70px;font-size:14.7px;color:#262626;font-weight:400;letter-spacing:0.000px;letter-spacing:-0.2px;">11</span>
<span class="t" style="left:120.4px;top:124.04px;font-size:15.6px;color:#3b3b3b;font-weight:700;letter-spacing:0.000px;">B</span>
<span class="t" style="left:151.5px;top:122.82px;font-size:16.8px;color:#3b3b3b;font-weight:400;letter-spacing:0.000px;font-family:'Liberation Serif',serif;font-style:italic;">I</span>
<span class="t" style="left:178.3px;top:123.13px;font-size:16.2px;color:#3b3b3b;font-weight:400;letter-spacing:0.000px;">U</span>
<span class="t" style="left:227.3px;top:124.39px;font-size:14.6px;color:#444;font-weight:400;letter-spacing:0.000px;">ab</span>
<span class="t" style="left:260px;top:122.99px;font-size:16.6px;color:#3b3b3b;font-weight:700;letter-spacing:0.000px;">x</span>
<span class="t" style="left:268.6px;top:135.39px;font-size:8.6px;color:#2e8bd8;font-weight:700;letter-spacing:0.000px;">2</span>
<span class="t" style="left:290px;top:122.99px;font-size:16.6px;color:#3b3b3b;font-weight:700;letter-spacing:0.000px;">x</span>
<span class="t" style="left:298.6px;top:121.99px;font-size:8.6px;color:#2e8bd8;font-weight:700;letter-spacing:0.000px;">2</span>
<span class="t" style="left:272.9px;top:154.16px;font-size:16.4px;color:#444;font-weight:400;letter-spacing:0.000px;">a</span>
<span class="t" style="left:217.6px;top:185.79px;font-size:13.3px;color:#444;font-weight:400;letter-spacing:-0.770px;">Font</span>
<span class="t" style="left:498.6px;top:151.16px;font-size:12.4px;color:#2e8bd8;font-weight:700;letter-spacing:0.000px;">A</span>
<span class="t" style="left:499.2px;top:161.76px;font-size:12.4px;color:#444;font-weight:700;letter-spacing:0.000px;">Z</span>
<span class="t" style="left:539.6px;top:151.22px;font-size:20.8px;color:#1a1a1a;font-weight:700;letter-spacing:0.000px;">¶</span>
<span class="t" style="left:454px;top:185.79px;font-size:13.3px;color:#444;font-weight:400;letter-spacing:-0.164px;">Paragraph</span>
<span class="t" style="left:628.5px;top:135.56px;font-size:14.4px;color:#444;font-weight:400;letter-spacing:-0.381px;">Styles</span>
<span class="t" style="left:620px;top:185.79px;font-size:13.3px;color:#444;font-weight:400;letter-spacing:-0.764px;">Styles</span>
<span class="t" style="left:693px;top:134.26px;font-size:14.4px;color:#444;font-weight:400;letter-spacing:0.331px;">Editing</span>
<span class="t" style="left:764.6px;top:135.56px;font-size:14.4px;color:#444;font-weight:400;letter-spacing:0.417px;">Dictate</span>
<span class="t" style="left:772px;top:185.79px;font-size:13.3px;color:#444;font-weight:400;letter-spacing:-0.633px;">Voice</span>
<span class="t" style="left:837.3px;top:135.56px;font-size:14.4px;color:#444;font-weight:400;letter-spacing:0.451px;">Add-ins</span>
<span class="t" style="left:840px;top:185.79px;font-size:13.3px;color:#444;font-weight:400;letter-spacing:-0.082px;">Add-ins</span>
<span class="t" style="left:918.6px;top:135.56px;font-size:14.4px;color:#444;font-weight:400;letter-spacing:0.321px;">Editor</span>
<span class="t" style="left:119.9px;top:211.13px;font-size:12.2px;color:#444;font-weight:400;letter-spacing:0.000px;">4</span>
<span class="t" style="left:251.9px;top:211.13px;font-size:12.2px;color:#444;font-weight:400;letter-spacing:0.000px;">3</span>
<span class="t" style="left:383.9px;top:211.13px;font-size:12.2px;color:#444;font-weight:400;letter-spacing:0.000px;">2</span>
<span class="t" style="left:515.9px;top:211.13px;font-size:12.2px;color:#444;font-weight:400;letter-spacing:0.000px;">1</span>
<span class="t" style="left:779.9px;top:211.13px;font-size:12.2px;color:#444;font-weight:400;letter-spacing:0.000px;">1</span>
<span class="t" style="left:911.9px;top:211.13px;font-size:12.2px;color:#444;font-weight:400;letter-spacing:0.000px;">2</span>
<span class="t" style="left:190.4px;top:240.44px;font-size:18.3px;color:#000;font-weight:400;letter-spacing:0.093px;">device.¶</span>
<span class="t" style="left:190.4px;top:282.14px;font-size:18.3px;color:#000;font-weight:400;letter-spacing:0.200px;">Video<span class="d">·</span>provides<span class="d">·</span>a<span class="d">·</span>powerful<span class="d">·</span>way<span class="d">·</span>to<span class="d">·</span>help<span class="d">·</span>you<span class="d">·</span></span>
<span class="t" style="left:190.4px;top:308.64px;font-size:18.3px;color:#000;font-weight:400;letter-spacing:0.177px;">prove<span class="d">·</span>your<span class="d">·</span>point.<span class="d">·</span>When<span class="d">·</span>you<span class="d">·</span>click<span class="d">·</span>Online<span class="d">·</span>Video,<span class="d">·</span></span>
<span class="t" style="left:190.4px;top:335.25px;font-size:18.3px;color:#000;font-weight:400;letter-spacing:0.175px;">you<span class="d">·</span>can<span class="d">·</span>paste<span class="d">·</span>in<span class="d">·</span>the<span class="d">·</span>embed<span class="d">·</span>code<span class="d">·</span>for<span class="d">·</span>the<span class="d">·</span>video<span class="d">·</span></span>
<span class="t" style="left:190.4px;top:361.84px;font-size:18.3px;color:#000;font-weight:400;letter-spacing:0.135px;">you<span class="d">·</span>want<span class="d">·</span>to<span class="d">·</span>add.<span class="d">·</span>You<span class="d">·</span>can<span class="d">·</span>also<span class="d">·</span>type<span class="d">·</span>a<span class="d">·</span>keyword<span class="d">·</span>to<span class="d">·</span></span>
<span class="t" style="left:190.4px;top:388.44px;font-size:18.3px;color:#000;font-weight:400;letter-spacing:0.244px;">search<span class="d">·</span>online<span class="d">·</span>for<span class="d">·</span>the<span class="d">·</span>video<span class="d">·</span>that<span class="d">·</span>best<span class="d">·</span>fits<span class="d">·</span>your<span class="d">·</span></span>
<span class="t" style="left:190.4px;top:415.25px;font-size:18.3px;color:#000;font-weight:400;letter-spacing:0.446px;">document.¶</span>
<span class="t" style="left:348.8px;top:460.46px;font-size:12.75px;color:#000;font-weight:400;letter-spacing:-0.100px;">Column Break</span>
<span class="t" style="left:11.3px;top:660.11px;font-size:12.7px;color:#555;font-weight:400;letter-spacing:0.079px;">Page 1 of 1</span>
<span class="t" style="left:102px;top:660.11px;font-size:12.7px;color:#555;font-weight:400;letter-spacing:0.244px;">478 words</span>
<span class="t" style="left:183.5px;top:660.11px;font-size:12.7px;color:#555;font-weight:400;letter-spacing:-0.020px;">2594 characters</span>
<span class="t" style="left:631px;top:660.11px;font-size:12.7px;color:#444;font-weight:400;letter-spacing:0.069px;">Display Settings</span>
<span class="t" style="left:765px;top:660.11px;font-size:12.7px;color:#444;font-weight:400;letter-spacing:-0.516px;">Focus</span>
<span class="t" style="left:1144px;top:660.11px;font-size:12.7px;color:#555;font-weight:400;letter-spacing:-0.505px;">110%</span>
</body></html>
